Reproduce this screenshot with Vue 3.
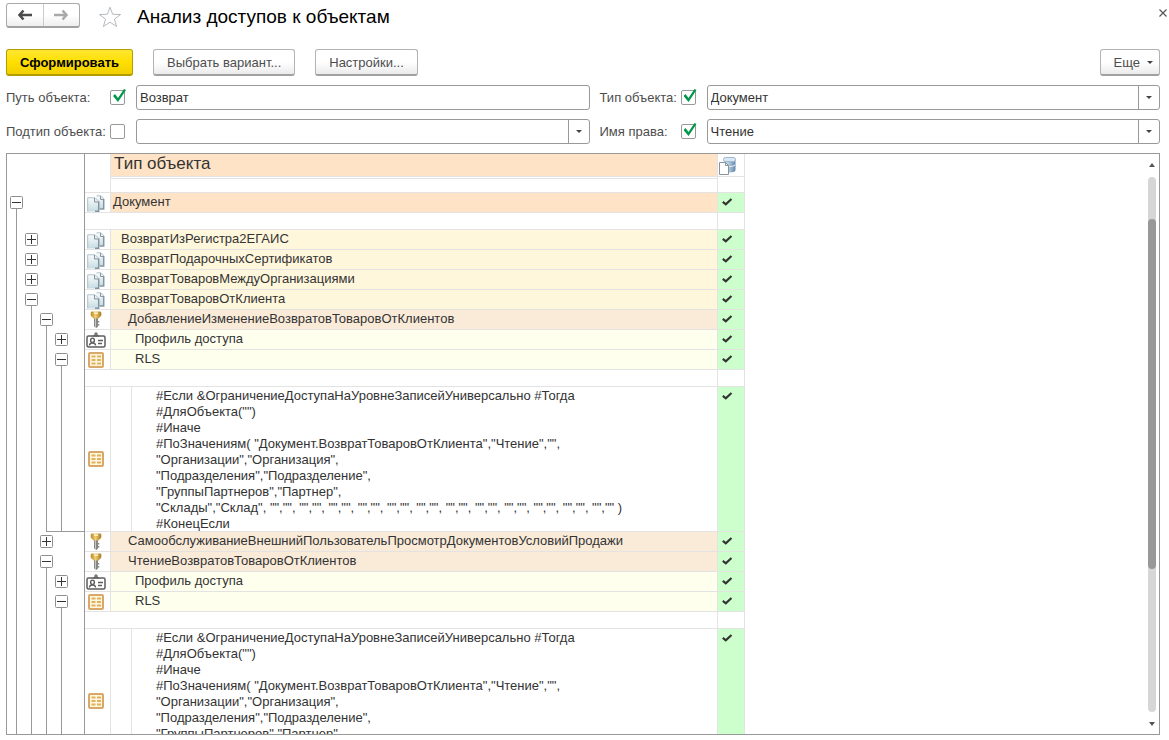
<script setup>
import { ref } from 'vue'

const path = ref('Возврат')
const usePath = ref(true)
const useSubtype = ref(false)
const useType = ref(true)
const useRight = ref(true)

const restriction = [
  '#Если &ОграничениеДоступаНаУровнеЗаписейУниверсально #Тогда',
  '#ДляОбъекта("")',
  '#Иначе',
  '#ПоЗначениям( "Документ.ВозвратТоваровОтКлиента","Чтение","",',
  '"Организации","Организация",',
  '"Подразделения","Подразделение",',
  '"ГруппыПартнеров","Партнер",',
  '"Склады","Склад", ' + '"","", '.repeat(11) + '"","" )',
  '#КонецЕсли',
]

// tree: one mark per nesting level: "+" and "-" are toggles, "|" is a connector
const rows = [
  { kind: 'thin', tree: '' },
  { kind: 'subhead', tree: '' },
  { kind: 'root', tree: '-', icon: 'doc', text: 'Документ' },
  { kind: 'gap', tree: '|' },
  { kind: 'object', tree: '|+', icon: 'doc', text: 'ВозвратИзРегистра2ЕГАИС' },
  { kind: 'object', tree: '|+', icon: 'doc', text: 'ВозвратПодарочныхСертификатов' },
  { kind: 'object', tree: '|+', icon: 'doc', text: 'ВозвратТоваровМеждуОрганизациями' },
  { kind: 'object', tree: '|-', icon: 'doc', text: 'ВозвратТоваровОтКлиента' },
  { kind: 'role', tree: '||-', icon: 'key', text: 'ДобавлениеИзменениеВозвратовТоваровОтКлиентов' },
  { kind: 'detail', tree: '|||+', icon: 'card', text: 'Профиль доступа' },
  { kind: 'detail', tree: '|||-', icon: 'grid', text: 'RLS' },
  { kind: 'gap', tree: '||||' },
  { kind: 'code', tree: '||||', icon: 'grid', closing: true },
  { kind: 'role', tree: '||+', icon: 'key', text: 'СамообслуживаниеВнешнийПользовательПросмотрДокументовУсловийПродажи' },
  { kind: 'role', tree: '||-', icon: 'key', text: 'ЧтениеВозвратовТоваровОтКлиентов' },
  { kind: 'detail', tree: '|||+', icon: 'card', text: 'Профиль доступа' },
  { kind: 'detail', tree: '|||-', icon: 'grid', text: 'RLS' },
  { kind: 'gap', tree: '||||' },
  { kind: 'code', tree: '||||', icon: 'grid' },
]

const hasCheck = (row) => !['thin', 'subhead', 'gap'].includes(row.kind)
</script>

<template>
  <main class="page">
    <svg class="defs" aria-hidden="true">
      <defs>
        <linearGradient id="gold" x1="0" y1="0" x2="1" y2="0">
          <stop offset="0" stop-color="#b98a2c" />
          <stop offset=".45" stop-color="#f0cd72" />
          <stop offset="1" stop-color="#a87820" />
        </linearGradient>
        <linearGradient id="sheet" x1="0" y1="0" x2="0" y2="1">
          <stop offset="0" stop-color="#f8fbfc" />
          <stop offset="1" stop-color="#c6dce2" />
        </linearGradient>
        <linearGradient id="drum" x1="0" y1="0" x2="1" y2="0">
          <stop offset="0" stop-color="#dbe8f3" />
          <stop offset=".4" stop-color="#b7cfe3" />
          <stop offset="1" stop-color="#6489ad" />
        </linearGradient>
        <symbol id="i-doc" viewBox="0 0 18 18">
          <path d="M9 2h5l3 3.500V15H9z" fill="url(#sheet)" />
          <path d="M9.500 1.800h4.500l3 3.200" fill="none" stroke="#b4c2c8" />
          <path d="M13.500 2v3.500h3.500" fill="#e9e9ec" stroke="#8b9aa2" />
          <path d="M16.700 5v10h-4" fill="none" stroke="#8495a0" stroke-width="1.500" />
          <path d="M.5 4h7.500l4 4v9.500H.5z" fill="url(#sheet)" />
          <path d="M.7 17.500V3.800H8l4 4" fill="none" stroke="#b0c1c8" />
          <path d="M7.500 4v4h4" fill="#ececf0" stroke="#84959d" />
          <path d="M11.700 7.500v9.700H8" fill="none" stroke="#8495a0" stroke-width="1.500" />
        </symbol>
        <symbol id="i-key" viewBox="0 0 12 17">
          <path d="M4 6h4v9.500L6.500 17 4 15.500z" fill="#878783" />
          <path d="M5.500 7v9" stroke="#c8c8c2" />
          <path d="M8 10h1.300v1.500H8zM8 13h1.300v1.500H8z" fill="#878783" />
          <path d="M2 .5h8q1.300 0 1.300 1.300V4q0 1-.9 1.600L8.500 7.500h-5L1.600 5.600Q.7 5 .7 4V1.800Q.7.5 2 .5z" fill="url(#gold)" />
          <path d="M4 2.200h4" stroke="#fff4c4" stroke-width="1.500" />
        </symbol>
        <symbol id="i-card" viewBox="0 0 20 16">
          <rect x="1" y="4" width="18" height="11" rx="1.500" fill="#fff" stroke="#5c5c5c" stroke-width="1.500" />
          <path d="M6.500 4.500 8.500 2.500h3l2 2z" fill="#5c5c5c" />
          <circle cx="10" cy="2" r="1.700" fill="#777" />
          <ellipse cx="6.500" cy="8.300" rx="1.900" ry="2.200" fill="#fff" stroke="#5c5c5c" stroke-width="1.400" />
          <path d="M3.300 13.500q.3-2 2.200-2.500h2q1.900.5 2.200 2.500" fill="none" stroke="#5c5c5c" stroke-width="1.400" />
          <path d="M12 8.500h5M12 11.500h4" stroke="#5c5c5c" stroke-width="1.400" />
        </symbol>
        <symbol id="i-grid" viewBox="0 0 16 16">
          <rect x="1" y="1" width="14" height="14" rx="1" fill="#fff6df" stroke="#d9a768" stroke-width="2" />
          <path d="M3.500 4.500h4M9 4.500h4M3.500 8h4M9 8h4M3.500 11.500h4M9 11.500h4" stroke="#e0b25c" stroke-width="2" />
        </symbol>
      </defs>
    </svg>

    <header class="title-bar">
      <div class="nav">
        <button type="button" aria-label="Назад">
          <svg width="14" height="12" viewBox="0 0 14 12"><path d="M5.500 1.500 1.500 6l4 4.500M2 6h12" fill="none" stroke="#4a4a4a" stroke-width="2.500" /></svg>
        </button>
        <button type="button" aria-label="Вперед">
          <svg width="14" height="12" viewBox="0 0 14 12"><path d="m8.500 1.500 4 4.500-4 4.500M12 6H0" fill="none" stroke="#a9a9a9" stroke-width="2.500" /></svg>
        </button>
      </div>
      <button type="button" class="plain star" aria-label="В избранное">
        <svg width="24" height="22" viewBox="0 0 24 22"><path d="m12 1.200 2.700 7.100 7.900.2-6.200 4.600 2.200 7.400L12 16.200l-6.600 4.300 2.200-7.400-6.200-4.600 7.900-.2z" fill="#fff" stroke="#b5bac0" /></svg>
      </button>
      <h1>Анализ доступов к объектам</h1>
      <button type="button" class="plain close" aria-label="Закрыть">
        <svg width="8" height="8" viewBox="0 0 8 8"><path d="m.5.5 7 7m0-7-7 7" stroke="#555" stroke-width="1.200" /></svg>
      </button>
    </header>

    <div class="commands">
      <button type="button" class="btn primary">Сформировать</button>
      <button type="button" class="btn">Выбрать вариант...</button>
      <button type="button" class="btn">Настройки...</button>
      <button type="button" class="btn more">Еще <span class="caret"></span></button>
    </div>

    <form class="filters" @submit.prevent>
      <div class="filter-name">
        <label for="path">Путь объекта:</label>
        <input v-model="usePath" type="checkbox" aria-label="Использовать путь объекта" />
      </div>
      <input id="path" v-model="path" class="field" type="text" />
      <div class="filter-name second">
        <label for="type">Тип объекта:</label>
        <input v-model="useType" type="checkbox" aria-label="Использовать тип объекта" />
      </div>
      <div class="combo">
        <select id="type" class="field"><option>Документ</option></select>
        <span class="drop"><span class="caret"></span></span>
      </div>
      <div class="filter-name">
        <label for="subtype">Подтип объекта:</label>
        <input v-model="useSubtype" type="checkbox" aria-label="Использовать подтип объекта" />
      </div>
      <div class="combo">
        <select id="subtype" class="field"><option></option></select>
        <span class="drop"><span class="caret"></span></span>
      </div>
      <div class="filter-name second">
        <label for="right">Имя права:</label>
        <input v-model="useRight" type="checkbox" aria-label="Использовать имя права" />
      </div>
      <div class="combo">
        <select id="right" class="field"><option>Чтение</option></select>
        <span class="drop"><span class="caret"></span></span>
      </div>
    </form>

    <section class="report">
      <div class="sheet">
        <table>
          <colgroup>
            <col class="c-tree" />
            <col class="c-icon" />
            <col class="c-main" />
            <col class="c-check" />
          </colgroup>
          <thead>
            <tr class="head">
              <td class="tree"></td>
              <td class="icon"></td>
              <th scope="col" class="main">Тип объекта</th>
              <th scope="col" class="check">
                <svg width="17" height="18" viewBox="0 0 17 18" role="img" aria-label="Чтение">
                  <path d="M4.500 2v11q0 2.500 6 2.500t6-2.500V2z" fill="url(#drum)" />
                  <rect x="4.500" y=".5" width="12" height="4" rx="2" fill="#dbe8f3" stroke="#9db8d0" />
                  <path d="M5 8q1 1.500 5.500 1.500T16 8" fill="none" stroke="#e9f1f8" />
                  <path d="M.5 5.500h6l3 3v9h-9z" fill="#fff" stroke="#8a929b" />
                  <path d="M6.500 5.500v3h3" fill="none" stroke="#8a929b" />
                </svg>
              </th>
            </tr>
          </thead>
          <tbody>
            <tr v-for="(row, i) in rows" :key="i" :class="row.kind">
              <td class="tree" :class="{ closing: row.closing }">
                <div class="levels">
                  <span v-for="(mark, n) in row.tree" :key="n" class="level" :class="{ line: mark === '|', open: mark === '-' }">
                    <button v-if="mark === '+' || mark === '-'" type="button" class="toggle" :aria-label="mark === '+' ? 'Развернуть' : 'Свернуть'">
                      <svg width="13" height="13" viewBox="0 0 13 13">
                        <rect x=".5" y=".5" width="12" height="12" rx="1" fill="#fff" stroke="#8f8f8f" />
                        <path :d="mark === '+' ? 'M2 6.500h9M6.500 2v9' : 'M2 6.500h9'" stroke="#333" />
                      </svg>
                    </button>
                  </span>
                </div>
              </td>
              <td class="icon">
                <svg v-if="row.icon" :class="'g-' + row.icon"><use :href="'#i-' + row.icon" /></svg>
              </td>
              <td class="main">
                <pre v-if="row.kind === 'code'">{{ restriction.join('\n') }}</pre>
                <template v-else>{{ row.text }}</template>
              </td>
              <td class="check">
                <svg v-if="hasCheck(row)" width="11" height="8" viewBox="0 0 11 8"><path d="M.8 3.800 3.800 6.300 9.500 1" fill="none" stroke="#333" stroke-width="2.200" /></svg>
              </td>
            </tr>
          </tbody>
        </table>
      </div>
      <div class="scroll">
        <span class="up"></span>
        <div class="track"><div class="thumb"></div></div>
        <span class="down"></span>
      </div>
    </section>
  </main>
</template>

<style>
body {
  background: #fff;
}
</style>

<style scoped>
* {
  box-sizing: border-box;
}
.page {
  display: flex;
  flex-direction: column;
  height: 100vh;
  padding: 3px 9px 5px 6px;
  font-family: "Liberation Sans", Arial, sans-serif;
  font-size: 13px;
  color: #333;
}
.defs {
  position: absolute;
  width: 0;
  height: 0;
}
button,
input,
select {
  font: inherit;
  color: inherit;
  margin: 0;
}
.title-bar {
  display: flex;
  align-items: center;
  height: 28px;
}
.nav {
  display: flex;
  align-self: flex-start;
  width: 74px;
  height: 25px;
  border: 1px solid #aaa;
  border-bottom: 2px solid #a2a2a2;
  border-radius: 3px;
  background: linear-gradient(#fff 50%, #eee);
}
.nav button {
  display: flex;
  flex: 1;
  align-items: center;
  justify-content: center;
  padding: 0;
  border: 0;
  background: none;
}
.nav button + button {
  border-left: 1px solid #ccc;
}
.plain {
  display: flex;
  padding: 0;
  border: 0;
  background: none;
}
.star {
  margin-left: 18px;
}
h1 {
  margin: 0 0 0 15px;
  font-size: 19px;
  font-weight: 400;
  line-height: 28px;
  color: #000;
}
.close {
  margin: -8px -7px 0 auto;
}
.commands {
  display: flex;
  gap: 20px;
  margin-top: 18px;
}
.btn {
  height: 27px;
  padding: 0 13px;
  border: 1px solid #b3b3b3;
  border-bottom: 2px solid #a0a0a0;
  border-radius: 3px;
  background: linear-gradient(#fff 50%, #ebebeb);
  color: #4d4d4d;
  white-space: nowrap;
}
.primary {
  border-color: #b39b00;
  background: linear-gradient(#ffe732, #ffdf00 50%, #f0d000);
  font-weight: 700;
  color: #000;
}
.more {
  display: flex;
  gap: 7px;
  align-items: center;
  margin-left: auto;
  padding-right: 6px;
}
.caret {
  width: 0;
  border: 3px solid transparent;
  border-top-color: #444;
  border-bottom: 0;
}
.filters {
  display: grid;
  grid-template-columns: 130px 1fr 117px 1fr;
  row-gap: 9px;
  margin-top: 9px;
}
.filter-name {
  display: flex;
  align-items: center;
  justify-content: space-between;
  padding-right: 11px;
  color: #4d4d4d;
}
.second {
  padding-left: 10px;
}
input[type="checkbox"] {
  appearance: none;
  position: relative;
  width: 15px;
  height: 15px;
  border: 1px solid #999;
  border-radius: 2px;
  background: #fff;
}
input[type="checkbox"]:checked::after {
  content: "";
  position: absolute;
  left: 2px;
  top: -2px;
  width: 13px;
  height: 13px;
  background: #00984a;
  clip-path: polygon(0 7px, 2px 5px, 5px 9px, 11px 0, 13px 1px, 5px 13px);
}
.field {
  display: block;
  width: 100%;
  height: 25px;
  padding: 0 3px;
  border: 1px solid #999;
  border-radius: 3px;
  background: #fff;
  appearance: none;
}
.combo {
  position: relative;
}
.drop {
  position: absolute;
  inset: 1px 1px 1px auto;
  display: flex;
  align-items: center;
  justify-content: center;
  width: 21px;
  border-left: 1px solid #999;
  pointer-events: none;
}
.report {
  display: flex;
  flex: 1;
  min-height: 0;
  margin-top: 9px;
  border: 1px solid #999;
}
.sheet {
  flex: 1;
  overflow: hidden;
}
table {
  width: 738px;
  table-layout: fixed;
  border-collapse: separate;
  border-spacing: 0;
}
.c-tree {
  width: 78px;
}
.c-icon {
  width: 26px;
}
.c-main {
  width: 607px;
}
.c-check {
  width: 27px;
}
td,
th {
  height: 20px;
  padding: 0;
  border: 0 solid #e3e3e3;
  border-bottom-width: 1px;
  font-weight: 400;
  text-align: left;
  line-height: 16px;
}
td.tree {
  border-right: 1px solid #999;
  border-bottom: 0;
}
.icon,
.main,
.check {
  border-right-width: 1px;
}
.main {
  padding-bottom: 2px;
}
.icon {
  padding-right: 3px;
}
.icon svg,
.check svg {
  display: block;
  margin: 0 auto;
}
.levels {
  display: flex;
  height: 100%;
  padding-left: 2px;
}
.level {
  display: flex;
  flex: 0 0 15px;
  align-items: center;
  justify-content: center;
  padding-bottom: 2px;
}
.line {
  background: linear-gradient(#999, #999) center / 1px 100% no-repeat;
}
.open {
  background: linear-gradient(#999, #999) bottom / 1px 50% no-repeat;
}
.closing {
  background: linear-gradient(#999, #999) right bottom / 38px 1px no-repeat;
}
.toggle {
  display: block;
  padding: 0;
  border: 0;
  background: none;
}
.toggle svg {
  display: block;
}
.g-doc {
  width: 18px;
  height: 18px;
}
.g-key {
  width: 12px;
  height: 17px;
}
.g-card {
  width: 20px;
  height: 16px;
}
.g-grid {
  width: 16px;
  height: 16px;
}
.check {
  padding-bottom: 1px;
  background: #ccffcc;
}
.check svg {
  margin-left: 4px;
}
.head td,
.head th {
  height: 23px;
}
.head .main {
  padding-left: 3px;
  background: #ffe3c6;
  font-size: 17px;
}
.head .check {
  padding: 2px 0 0;
  background: none;
}
.head .check svg {
  margin-left: 1px;
}
.head .icon,
.thin .icon {
  border-bottom: 0;
}
.thin td {
  height: 2px;
  padding: 0;
  line-height: 0;
}
.thin .check {
  border-bottom: 0;
}
.subhead td {
  height: 14px;
  line-height: 0;
}
.gap td {
  height: 17px;
  line-height: 0;
}
.gap .icon {
  border-right: 0;
}
.thin .check,
.subhead .check,
.gap .check {
  background: none;
}
.root .main {
  padding-left: 2px;
  background: #ffe3c6;
}
.object .main {
  padding-left: 10px;
  background: #fff7dc;
}
.role .main {
  padding-left: 17px;
  background: #faebd9;
}
.detail .main {
  padding-left: 24px;
  background: #ffffee;
}
.code td {
  height: 145px;
}
.code .main {
  padding: 0 0 0 20px;
}
.code .check {
  padding-top: 5px;
  vertical-align: top;
}
pre {
  height: 144px;
  margin: 0;
  padding: 1px 0 0 24px;
  border-left: 1px solid #e3e3e3;
  font: inherit;
}
.scroll {
  display: flex;
  flex: 0 0 15px;
  flex-direction: column;
  align-items: center;
  padding: 9px 0 8px;
}
.up,
.down {
  width: 0;
  border: 3px solid transparent;
}
.up {
  border-top: 0;
  border-bottom: 4px solid #555;
}
.down {
  border-bottom: 0;
  border-top: 4px solid #555;
}
.track {
  flex: 1;
  width: 8px;
  margin: 10px 0;
  padding-top: 42px;
  border-radius: 4px;
  background: #d6d6d6;
}
.thumb {
  height: 71%;
  border-radius: 4px;
  background: #999;
}
</style>
